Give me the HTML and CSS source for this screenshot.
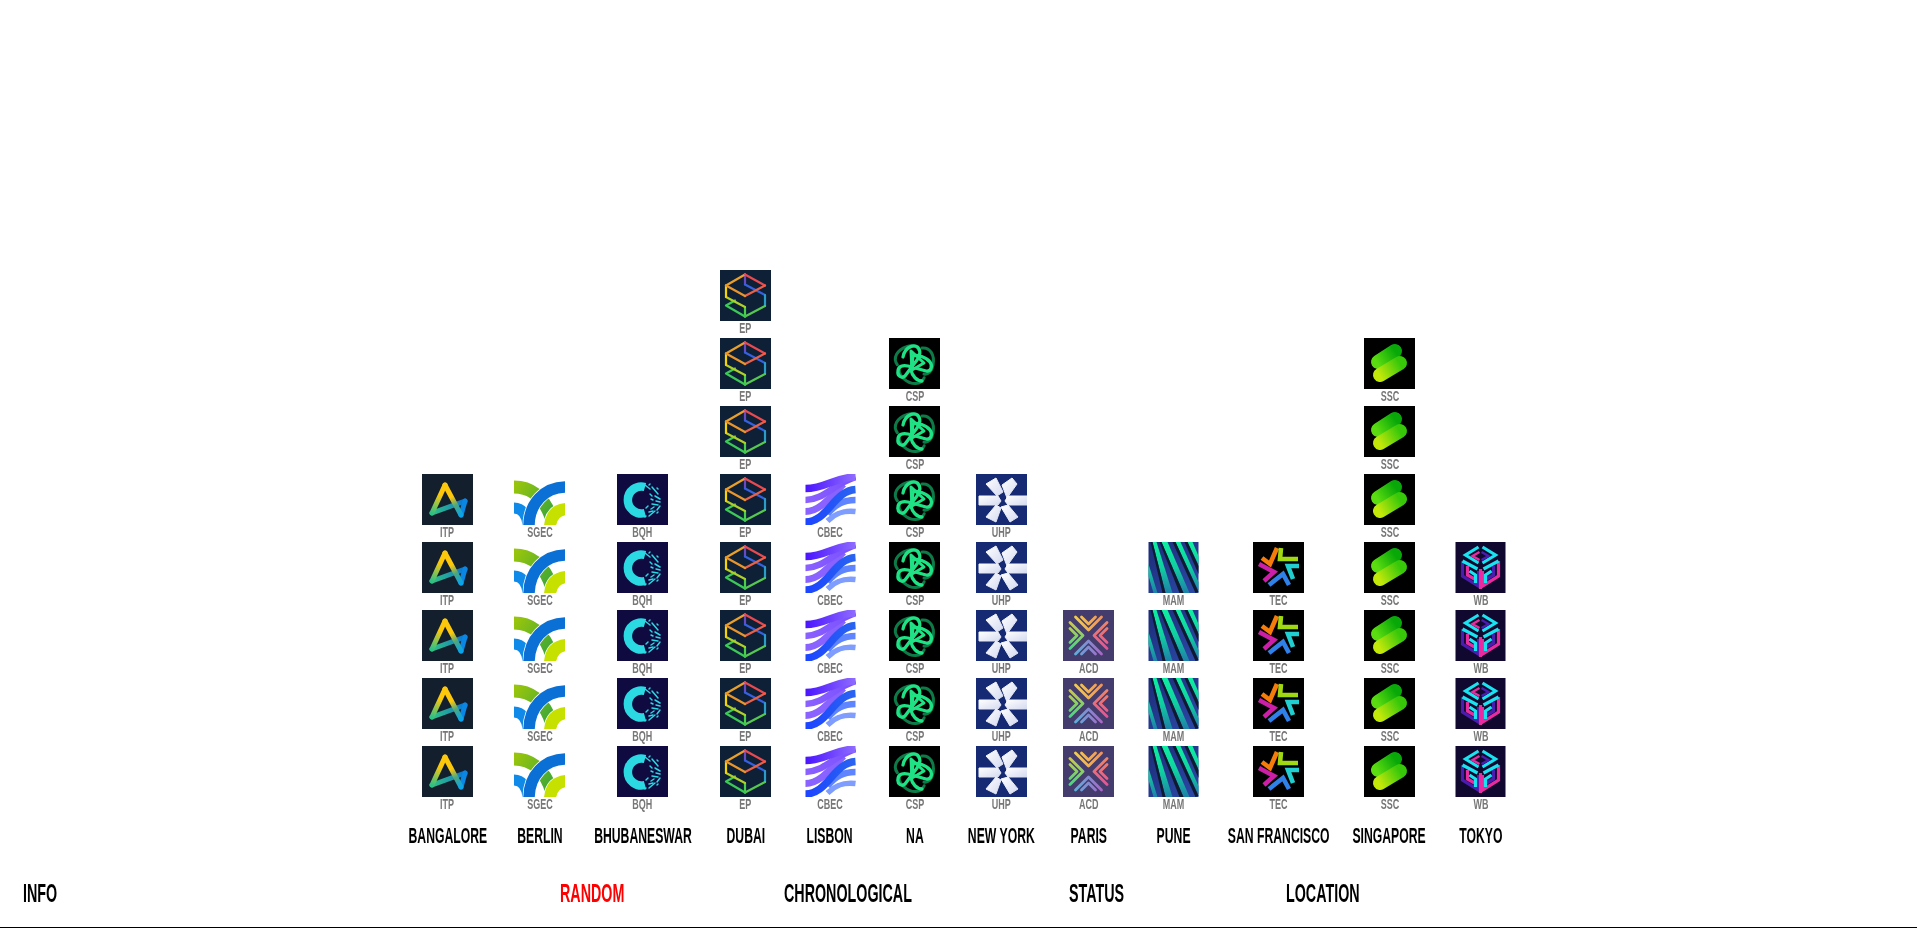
FILE: index.html
```html
<!DOCTYPE html>
<html lang="en">
<head>
<meta charset="utf-8">
<title>Chart</title>
<link rel="stylesheet" href="styles.css">
</head>
<body>
<svg class="defs" aria-hidden="true">
<defs>
<linearGradient id="g-itp1" gradientUnits="userSpaceOnUse" x1="23" y1="11" x2="10" y2="39"><stop offset=".35" stop-color="#fdc70c"/><stop offset="1" stop-color="#2fc184"/></linearGradient>
<linearGradient id="g-itp2" gradientUnits="userSpaceOnUse" x1="10" y1="39" x2="43" y2="27"><stop offset="0" stop-color="#2fc184"/><stop offset=".55" stop-color="#1f9aa8"/><stop offset="1" stop-color="#0a72d8"/></linearGradient>
<linearGradient id="g-itp3" gradientUnits="userSpaceOnUse" x1="23" y1="11" x2="39" y2="41"><stop offset=".4" stop-color="#fdc70c"/><stop offset=".68" stop-color="#4aa880"/><stop offset="1" stop-color="#08a4ec"/></linearGradient>
<linearGradient id="g-ssc1" gradientUnits="userSpaceOnUse" x1="13" y1="25" x2="31" y2="13"><stop offset="0" stop-color="#5bdc10"/><stop offset="1" stop-color="#08a808"/></linearGradient>
<linearGradient id="g-ssc2" gradientUnits="userSpaceOnUse" x1="16" y1="38" x2="36" y2="26"><stop offset="0" stop-color="#c2e80a"/><stop offset="1" stop-color="#38c80a"/></linearGradient>
<linearGradient id="g-green" gradientUnits="userSpaceOnUse" x1="0" y1="13" x2="35" y2="38"><stop offset="0" stop-color="#98c50c"/><stop offset="1" stop-color="#44a934"/></linearGradient>
<linearGradient id="g-cb1" gradientUnits="userSpaceOnUse" x1="0" y1="0" x2="50" y2="0"><stop offset="0" stop-color="#4a14ff"/><stop offset="1" stop-color="#8f6cff"/></linearGradient>
<linearGradient id="g-cb2" gradientUnits="userSpaceOnUse" x1="0" y1="0" x2="50" y2="0"><stop offset="0" stop-color="#8a60ff"/><stop offset="1" stop-color="#7a50ff"/></linearGradient>
<linearGradient id="g-cb3" gradientUnits="userSpaceOnUse" x1="0" y1="0" x2="50" y2="0"><stop offset="0" stop-color="#1c44ff"/><stop offset="1" stop-color="#2a64f0"/></linearGradient>
<linearGradient id="g-mam" gradientUnits="userSpaceOnUse" x1="0" y1="0" x2="0" y2="51"><stop offset="0" stop-color="#0cf0a0"/><stop offset=".5" stop-color="#10cfa0"/><stop offset="1" stop-color="#1e80a8"/></linearGradient>
<linearGradient id="g-mam2" gradientUnits="userSpaceOnUse" x1="0" y1="0" x2="50" y2="51"><stop offset="0" stop-color="#1c2c78"/><stop offset="1" stop-color="#2c4aa8"/></linearGradient>
<linearGradient id="g-uhp" x1="0" y1="0" x2="1" y2="1"><stop offset="0" stop-color="#ffffff"/><stop offset="1" stop-color="#d4daf0"/></linearGradient>
<linearGradient id="g-acd1" gradientUnits="userSpaceOnUse" x1="10" y1="0" x2="41" y2="0"><stop offset="0" stop-color="#f4d14c"/><stop offset="1" stop-color="#f08e5c"/></linearGradient>
<linearGradient id="g-acd2" gradientUnits="userSpaceOnUse" x1="10" y1="0" x2="41" y2="0"><stop offset="0" stop-color="#f08a60"/><stop offset="1" stop-color="#e0509c"/></linearGradient>
<linearGradient id="g-acd3" gradientUnits="userSpaceOnUse" x1="10" y1="0" x2="41" y2="0"><stop offset="0" stop-color="#b060c4"/><stop offset="1" stop-color="#58b4dc"/></linearGradient>
<linearGradient id="g-acd4" gradientUnits="userSpaceOnUse" x1="10" y1="0" x2="41" y2="0"><stop offset="0" stop-color="#3ed48a"/><stop offset="1" stop-color="#d8c848"/></linearGradient>

<symbol id="itp" viewBox="0 0 51 51">
<rect width="51" height="51" fill="#141f2e"/>
<g fill="none" stroke-width="5" stroke-linecap="round" stroke-linejoin="round">
<path d="M10 39 L43 27" stroke="url(#g-itp2)"/>
<path d="M43 27 L39 41" stroke="#0a86e4"/>
<path d="M39 41 L23 11" stroke="url(#g-itp3)"/>
<path d="M23 11 L10 39" stroke="url(#g-itp1)"/>
</g>
</symbol>

<symbol id="sgec" viewBox="0 0 51 51">
<g fill="none">
<path d="M0 34 C8 34 13 41 14 51" stroke="#0f8ae8" stroke-width="11"/>
<path d="M0 13 C15 13 30 21 38 46" stroke="url(#g-green)" stroke-width="13"/>
<path d="M52 35 C42 36 37 42 36 52" stroke="#fff" stroke-width="13.5"/>
<path d="M52 35 C42 36 37 42 36 52" stroke="#c6e000" stroke-width="12"/>
<path d="M52 13 C30 13 15 30 15 52" stroke="#fff" stroke-width="13"/>
<path d="M52 13 C30 13 15 30 15 52" stroke="#0a70d6" stroke-width="11.5"/>
</g>
</symbol>

<symbol id="bqh" viewBox="0 0 51 51">
<rect width="51" height="51" fill="#0f0a40"/>
<path d="M28 13 A13.5 13.5 0 1 0 28 39" fill="none" stroke="#2bd9e3" stroke-width="8.5"/>
<g stroke="#2bd9e3" stroke-width="1.5" stroke-linecap="round">
<path d="M28 11 L33 15"/><path d="M33 10 L32 11"/><path d="M35 13 L41 20"/><path d="M40 14 L41 15"/>
<path d="M33 20 L35 22"/><path d="M38 22 L43 25"/><path d="M34 25 L36 26"/><path d="M39 27 L43 28"/>
<path d="M35 30 L41 31"/><path d="M37 33 L34 35"/><path d="M43 32 L40 36"/><path d="M36 37 L32 38"/>
<path d="M38 37 L32 42"/><path d="M29 42 L28 43"/><path d="M29 34 L31 32"/><path d="M41 38 L40 39"/>
</g>
</symbol>

<symbol id="ep" viewBox="0 0 51 51">
<rect width="51" height="51" fill="#0e2036"/>
<g fill="none" stroke-width="2.2" stroke-linecap="round" stroke-linejoin="round">
<path d="M25 14.5 V4.5" stroke="#6a4ac0"/>
<path d="M25 14.5 L45 25" stroke="#3560e0"/>
<path d="M45 25 V36" stroke="#2a9cc8"/>
<path d="M45 36 L25 46.5" stroke="#56c850"/>
<path d="M25 37 V46.5" stroke="#48d048"/>
<path d="M25 46.5 L6 35.5 L15 30.5" stroke="#3ec858"/>
<path d="M6 27 L25 37" stroke="#b0d028"/>
<path d="M6 15.5 V27" stroke="#f6d400"/>
<path d="M6 15.5 L25 4.5" stroke="#eaa028"/>
<path d="M25 4.5 L45 15.5" stroke="#e84a50"/>
<path d="M45 15.5 L25 26" stroke="#e8604a"/>
<path d="M25 26 L6 15.5" stroke="#e8962c"/>
</g>
</symbol>

<symbol id="cbec" viewBox="0 0 50 51">
<g fill="none">
<path d="M0 37.5 C14 37.5 24 24 38 10" stroke="#8a62ff" stroke-width="7"/>
<path d="M0 26 C18 26 28 10 50 3" stroke="url(#g-cb2)" stroke-width="6.5"/>
<path d="M0 14.5 C20 14.5 30 3 50 3" stroke="url(#g-cb1)" stroke-width="7.5"/>
<path d="M50 37.5 C38 36 30 39 22 47" stroke="#7f9cff" stroke-width="5.5"/>
<path d="M50 26 C38 26 30 30 22 40" stroke="#5f84ff" stroke-width="6.5"/>
<path d="M0 48 C22 48 28 17 50 15.5" stroke="url(#g-cb3)" stroke-width="7.5"/>
</g>
</symbol>

<symbol id="csp" viewBox="0 0 51 51">
<rect width="51" height="51" fill="#000"/>
<g fill="none" stroke-linecap="round" stroke-linejoin="round">
<g stroke="#0e7a48" stroke-width="3">
<path d="M33 10 C41 9 46 17 44 27 C43 33 39 37 35 36"/>
<path d="M33 10 C41 9 46 17 44 27 C43 33 39 37 35 36" transform="rotate(120 25.5 25.5)"/>
<path d="M33 10 C41 9 46 17 44 27 C43 33 39 37 35 36" transform="rotate(240 25.5 25.5)"/>
</g>
<g stroke="#1fe284" stroke-width="3.3">
<path d="M14 19 C16 8 27 5 30 11 C32 15 31 18 28 22 L16 38 C13 41 8 38 9 33 C9 28 14 27 19 28 L37 33 C42 34 44 28 41 24 C38 20 29 16 24 18 L22 32"/>
<path d="M22 13 L35 25 L23 32 Z" stroke-width="3"/>
<path d="M22 32 C23 38 28 43 33 43"/>
</g>
</g>
</symbol>

<symbol id="uhp" viewBox="0 0 51 51">
<rect width="51" height="51" fill="#152a72"/>
<g fill="url(#g-uhp)" stroke="url(#g-uhp)" stroke-width="1" stroke-linejoin="round">
<path d="M10 10 L20 4 L27 18 L21 22 Z"/>
<path d="M26 11 L36 4 L41 10 L31 24 Z"/>
<path d="M3 22 L22 22 L25 27 L22 31 L3 31 Z"/>
<path d="M32 22 L51 22 L51 31 L32 31 L29 27 Z"/>
<path d="M10 43 L20 31 L25 34 L20 48 Z"/>
<path d="M25 33 L32 31 L42 43 L34 48 Z"/>
</g>
</symbol>

<symbol id="acd" viewBox="0 0 51 51">
<rect width="51" height="51" fill="#433c6c"/>
<g fill="none" stroke-width="2.8" stroke-linecap="round" stroke-linejoin="round">
<g stroke="url(#g-acd1)"><path d="M12.5 7 L25.5 20 L38.5 7"/><path d="M18.5 7 L25.5 14 L32.5 7"/></g>
<g stroke="url(#g-acd2)" transform="rotate(90 25.5 25.5)"><path d="M12.5 7 L25.5 20 L38.5 7"/><path d="M18.5 7 L25.5 14 L32.5 7"/></g>
<g stroke="url(#g-acd3)" transform="rotate(180 25.5 25.5)"><path d="M12.5 7 L25.5 20 L38.5 7"/><path d="M18.5 7 L25.5 14 L32.5 7"/></g>
<g stroke="url(#g-acd4)" transform="rotate(270 25.5 25.5)"><path d="M12.5 7 L25.5 20 L38.5 7"/><path d="M18.5 7 L25.5 14 L32.5 7"/></g>
</g>
</symbol>

<symbol id="mam" viewBox="0 0 50 51">
<rect width="50" height="51" fill="url(#g-mam2)"/>
<g fill="url(#g-mam)">
<path d="M0 22 V34 L5 51 H9 Z"/>
<path d="M4 0 H8 L24 51 H17 Z"/>
<path d="M13 0 H19 L41 51 H35 Z"/>
<path d="M27 0 H32 L50 40 V49 Z"/>
<path d="M39 0 H44 L50 14 V23 Z"/>
</g>
<g fill="#0f1a30">
<path d="M2 0 H4 L17 51 H14 Z"/>
<path d="M11 0 H13 L35 51 H31 Z"/>
<path d="M24 0 H27 L50 50 L47 51 Z"/>
<path d="M36 0 H39 L50 24 V32 Z"/>
</g>
</symbol>

<symbol id="tec" viewBox="0 0 51 51">
<rect width="51" height="51" fill="#000"/>
<g fill="none" stroke-width="4.6" stroke-linejoin="miter" stroke-miterlimit="3">
<path d="M24 6 L17 22 L9 16" stroke="#f57c0a"/>
<path d="M28 6 L27 17 L45 17" stroke="#a0d911"/>
<path d="M46 24 L35 24 L40 37" stroke="#22cfd0"/>
<path d="M16 43 L30 32 L36 43" stroke="#2f80e8"/>
<path d="M6 22 L21 30 L11 39" stroke="#cc1fa8"/>
</g>
</symbol>

<symbol id="ssc" viewBox="0 0 51 51">
<rect width="51" height="51" fill="#000"/>
<g fill="none" stroke-width="14" stroke-linecap="round">
<path d="M14 24 L31 13" stroke="url(#g-ssc1)"/>
<path d="M16 37 L36 25" stroke="url(#g-ssc2)"/>
</g>
</symbol>

<symbol id="wb" viewBox="0 0 50 51">
<rect width="50" height="51" fill="#10082e"/>
<g fill="none" stroke-width="3.2">
<path d="M7 19 V34 L23 44 V29" stroke="#4a1cb0"/>
<path d="M43 19 V34 L27 44 V29" stroke="#e82ca0"/>
<path d="M25 27 V47" stroke="#e82ca0"/>
<path d="M12 24 V33 L19 37" stroke="#e82ca0"/>
<path d="M38 24 V33 L31 37" stroke="#4a1cb0"/>
<path d="M23 5 L10 13 L23 21" stroke="#19e3f0"/>
<path d="M27 5 L40 13 L27 21" stroke="#19e3f0"/>
<path d="M24 10 L17 14 L24 18" stroke="#e82ca0" stroke-width="2.4"/>
<path d="M26 10 L33 14 L26 18" stroke="#4a1cb0" stroke-width="2.4"/>
<path d="M7 19 L22 27" stroke="#19e3f0"/>
<path d="M43 19 L28 27" stroke="#19e3f0"/>
<path d="M14 29 L20 33 V41" stroke="#19e3f0"/>
<path d="M36 29 L30 33 V41" stroke="#19e3f0"/>
</g>
</symbol>
</defs>
</svg>

<main class="page">
<section class="chart">
<div class="col"><div class="tile"><svg class="ico"><use href="#itp"/></svg><span class="code">ITP</span></div><div class="tile"><svg class="ico"><use href="#itp"/></svg><span class="code">ITP</span></div><div class="tile"><svg class="ico"><use href="#itp"/></svg><span class="code">ITP</span></div><div class="tile"><svg class="ico"><use href="#itp"/></svg><span class="code">ITP</span></div><div class="tile"><svg class="ico"><use href="#itp"/></svg><span class="code">ITP</span></div><span class="city">BANGALORE</span></div>
<div class="col"><div class="tile"><svg class="ico"><use href="#sgec"/></svg><span class="code">SGEC</span></div><div class="tile"><svg class="ico"><use href="#sgec"/></svg><span class="code">SGEC</span></div><div class="tile"><svg class="ico"><use href="#sgec"/></svg><span class="code">SGEC</span></div><div class="tile"><svg class="ico"><use href="#sgec"/></svg><span class="code">SGEC</span></div><div class="tile"><svg class="ico"><use href="#sgec"/></svg><span class="code">SGEC</span></div><span class="city">BERLIN</span></div>
<div class="col"><div class="tile"><svg class="ico"><use href="#bqh"/></svg><span class="code">BQH</span></div><div class="tile"><svg class="ico"><use href="#bqh"/></svg><span class="code">BQH</span></div><div class="tile"><svg class="ico"><use href="#bqh"/></svg><span class="code">BQH</span></div><div class="tile"><svg class="ico"><use href="#bqh"/></svg><span class="code">BQH</span></div><div class="tile"><svg class="ico"><use href="#bqh"/></svg><span class="code">BQH</span></div><span class="city">BHUBANESWAR</span></div>
<div class="col"><div class="tile"><svg class="ico"><use href="#ep"/></svg><span class="code">EP</span></div><div class="tile"><svg class="ico"><use href="#ep"/></svg><span class="code">EP</span></div><div class="tile"><svg class="ico"><use href="#ep"/></svg><span class="code">EP</span></div><div class="tile"><svg class="ico"><use href="#ep"/></svg><span class="code">EP</span></div><div class="tile"><svg class="ico"><use href="#ep"/></svg><span class="code">EP</span></div><div class="tile"><svg class="ico"><use href="#ep"/></svg><span class="code">EP</span></div><div class="tile"><svg class="ico"><use href="#ep"/></svg><span class="code">EP</span></div><div class="tile"><svg class="ico"><use href="#ep"/></svg><span class="code">EP</span></div><span class="city">DUBAI</span></div>
<div class="col"><div class="tile"><svg class="ico"><use href="#cbec"/></svg><span class="code">CBEC</span></div><div class="tile"><svg class="ico"><use href="#cbec"/></svg><span class="code">CBEC</span></div><div class="tile"><svg class="ico"><use href="#cbec"/></svg><span class="code">CBEC</span></div><div class="tile"><svg class="ico"><use href="#cbec"/></svg><span class="code">CBEC</span></div><div class="tile"><svg class="ico"><use href="#cbec"/></svg><span class="code">CBEC</span></div><span class="city">LISBON</span></div>
<div class="col"><div class="tile"><svg class="ico"><use href="#csp"/></svg><span class="code">CSP</span></div><div class="tile"><svg class="ico"><use href="#csp"/></svg><span class="code">CSP</span></div><div class="tile"><svg class="ico"><use href="#csp"/></svg><span class="code">CSP</span></div><div class="tile"><svg class="ico"><use href="#csp"/></svg><span class="code">CSP</span></div><div class="tile"><svg class="ico"><use href="#csp"/></svg><span class="code">CSP</span></div><div class="tile"><svg class="ico"><use href="#csp"/></svg><span class="code">CSP</span></div><div class="tile"><svg class="ico"><use href="#csp"/></svg><span class="code">CSP</span></div><span class="city">NA</span></div>
<div class="col"><div class="tile"><svg class="ico"><use href="#uhp"/></svg><span class="code">UHP</span></div><div class="tile"><svg class="ico"><use href="#uhp"/></svg><span class="code">UHP</span></div><div class="tile"><svg class="ico"><use href="#uhp"/></svg><span class="code">UHP</span></div><div class="tile"><svg class="ico"><use href="#uhp"/></svg><span class="code">UHP</span></div><div class="tile"><svg class="ico"><use href="#uhp"/></svg><span class="code">UHP</span></div><span class="city">NEW YORK</span></div>
<div class="col"><div class="tile"><svg class="ico"><use href="#acd"/></svg><span class="code">ACD</span></div><div class="tile"><svg class="ico"><use href="#acd"/></svg><span class="code">ACD</span></div><div class="tile"><svg class="ico"><use href="#acd"/></svg><span class="code">ACD</span></div><span class="city">PARIS</span></div>
<div class="col"><div class="tile"><svg class="ico"><use href="#mam"/></svg><span class="code">MAM</span></div><div class="tile"><svg class="ico"><use href="#mam"/></svg><span class="code">MAM</span></div><div class="tile"><svg class="ico"><use href="#mam"/></svg><span class="code">MAM</span></div><div class="tile"><svg class="ico"><use href="#mam"/></svg><span class="code">MAM</span></div><span class="city">PUNE</span></div>
<div class="col"><div class="tile"><svg class="ico"><use href="#tec"/></svg><span class="code">TEC</span></div><div class="tile"><svg class="ico"><use href="#tec"/></svg><span class="code">TEC</span></div><div class="tile"><svg class="ico"><use href="#tec"/></svg><span class="code">TEC</span></div><div class="tile"><svg class="ico"><use href="#tec"/></svg><span class="code">TEC</span></div><span class="city">SAN FRANCISCO</span></div>
<div class="col"><div class="tile"><svg class="ico"><use href="#ssc"/></svg><span class="code">SSC</span></div><div class="tile"><svg class="ico"><use href="#ssc"/></svg><span class="code">SSC</span></div><div class="tile"><svg class="ico"><use href="#ssc"/></svg><span class="code">SSC</span></div><div class="tile"><svg class="ico"><use href="#ssc"/></svg><span class="code">SSC</span></div><div class="tile"><svg class="ico"><use href="#ssc"/></svg><span class="code">SSC</span></div><div class="tile"><svg class="ico"><use href="#ssc"/></svg><span class="code">SSC</span></div><div class="tile"><svg class="ico"><use href="#ssc"/></svg><span class="code">SSC</span></div><span class="city">SINGAPORE</span></div>
<div class="col"><div class="tile"><svg class="ico"><use href="#wb"/></svg><span class="code">WB</span></div><div class="tile"><svg class="ico"><use href="#wb"/></svg><span class="code">WB</span></div><div class="tile"><svg class="ico"><use href="#wb"/></svg><span class="code">WB</span></div><div class="tile"><svg class="ico"><use href="#wb"/></svg><span class="code">WB</span></div><span class="city">TOKYO</span></div>
</section>
<nav class="nav">
<a class="nav-item">INFO</a>
<a class="nav-item active">RANDOM</a>
<a class="nav-item">CHRONOLOGICAL</a>
<a class="nav-item">STATUS</a>
<a class="nav-item">LOCATION</a>
</nav>
</main>
</body>
</html>
```
FILE: styles.css
```css
* { box-sizing: border-box; }
html, body { margin: 0; height: 100%; background: #fff; overflow: hidden; }
body { font-family: "Liberation Sans", Arial, sans-serif; font-weight: 700; color: #000; }
.defs { position: absolute; width: 0; height: 0; }

.page {
  height: 928px;
  display: flex;
  flex-direction: column;
  justify-content: flex-end;
  border-bottom: 1px solid #000;
}

.chart {
  display: grid;
  grid-template-columns: 109px 75px 131px 75px 94px 75px 99px 75px 95px 115px 107px 75px;
  align-items: end;
  margin-left: 393px;
  width: 1125px;
}
.col { display: flex; flex-direction: column; align-items: center; }
.tile { display: flex; flex-direction: column; align-items: center; height: 68px; width: 51px; }
.ico { width: 51px; height: 51px; flex: none; display: block; filter: blur(.35px); }

.code {
  display: block;
  height: 17px;
  line-height: 13px;
  font-size: 15.5px;
  color: #777;
  white-space: nowrap;
  transform: scaleX(.58);
}
.city {
  display: block;
  margin-top: 10px;
  height: 24px;
  line-height: 24px;
  font-size: 22px;
  white-space: nowrap;
  transform: scaleX(.555);
}

.nav {
  display: grid;
  grid-template-columns: 537px 224px 285px 217px auto;
  padding-left: 23px;
  margin-top: 30px;
  height: 49px;
}
.nav-item {
  font-size: 26px;
  line-height: 30px;
  white-space: nowrap;
  transform: scaleX(.55);
  transform-origin: left center;
}
.nav-item.active { color: #f00; }
```
